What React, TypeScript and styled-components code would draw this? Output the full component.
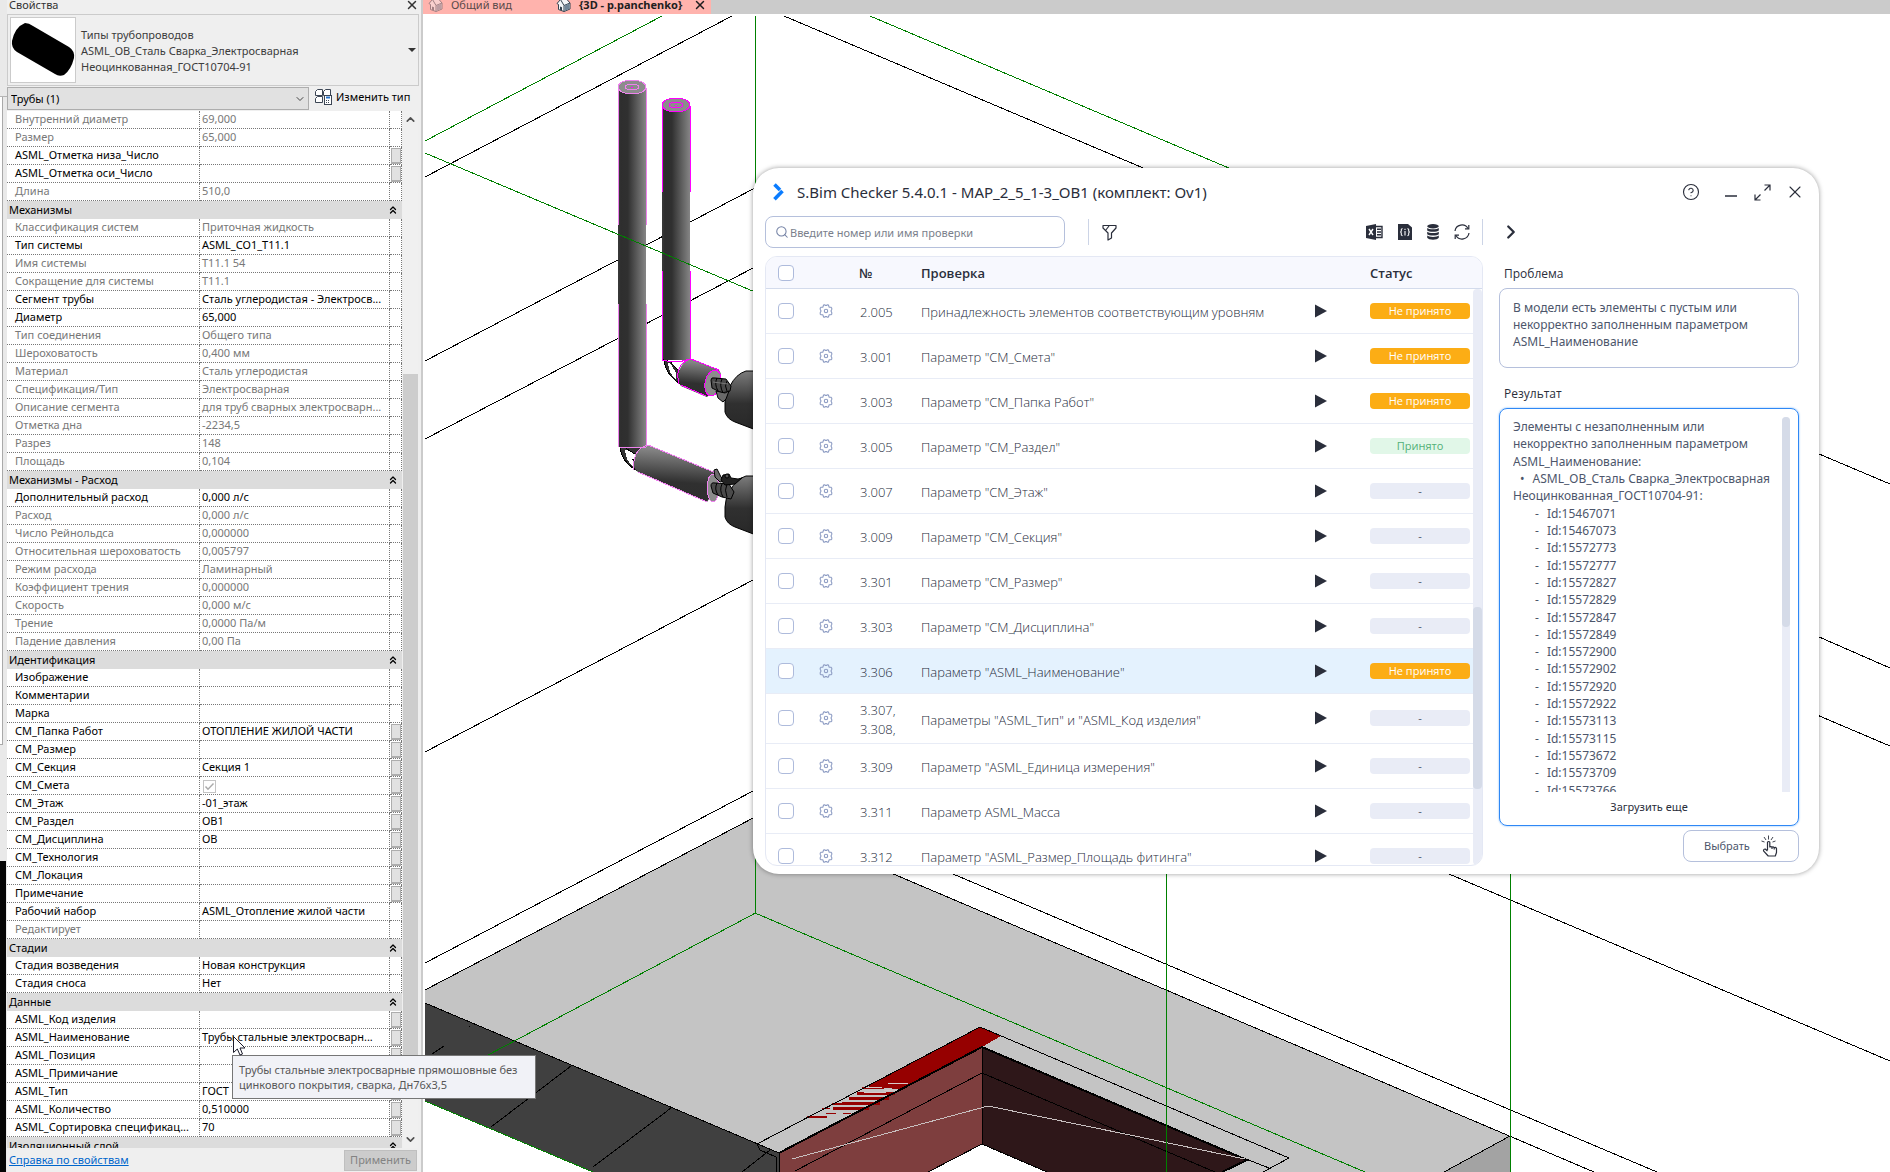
import React from 'react';
import styled, { createGlobalStyle, css } from 'styled-components';
import { ChevronDown, ChevronUp, ChevronsUp, ChevronRight, Search, X, CircleHelp } from 'lucide-react';

const uiFont = '"Noto Sans", "Open Sans", sans-serif';
const lightFont = '"Open Sans", "Noto Sans", sans-serif';

const GlobalStyle = createGlobalStyle`
  *, *::before, *::after { box-sizing: border-box; }
  body { margin: 0; background: #fff; font-family: ${uiFont}; font-size: 11px; line-height: 16px; color: #000; }
  button, input, select { font: inherit; color: inherit; margin: 0; }
  button { padding: 0; border: 0; background: none; cursor: pointer; }
`;

/* ---------- shell ---------- */

const Desktop = styled.div`
  position: relative;
  display: grid;
  grid-template-columns: 7px 416px minmax(0, 1fr);
  height: 100vh;
  overflow: hidden;
`;

const Gutter = styled.div`
  display: flex;
  flex-direction: column;
  background: #e9e9e9;
`;

const GutterTop = styled.div`
  height: 97px;
  border-bottom: 1px solid #b5b5b5;
`;

const GutterList = styled.div`
  height: 648px;
  width: 3px;
  background: #fff;
  border-right: 1px solid #a9a9a9;
  border-bottom: 1px solid #a9a9a9;
`;

const GutterGap = styled.div`
  height: 116px;
`;

const GutterDark = styled.div`
  flex: 1;
  width: 6px;
  background: #050505;
`;

/* ---------- properties palette ---------- */

const Palette = styled.aside`
  display: flex;
  flex-direction: column;
  min-width: 0;
  background: #efefef;
  border-right: 2px solid #cbcbcb;
  overflow: hidden;
`;

const PaletteTitle = styled.header`
  display: flex;
  align-items: center;
  justify-content: space-between;
  height: 14px;
  padding: 0 2px 4px;
  line-height: 10px;
  color: #333;
  flex: none;
`;

const IconButton = styled.button`
  display: grid;
  place-items: center;
  flex: none;
`;

const TypeSelector = styled.div`
  display: flex;
  align-items: center;
  gap: 5px;
  height: 72px;
  margin-right: 2px;
  padding: 2px;
  border: 1px solid #cbcbcb;
  flex: none;
  color: #3c3c3c;
`;

const Preview = styled.svg`
  width: 66px;
  height: 66px;
  background: #fff;
  border: 1px solid #cbcbcb;
  flex: none;
`;

const TypeName = styled.div`
  flex: 1;
  padding-top: 2px;
`;

const CaretDown = styled.span`
  border: 4px solid transparent;
  border-top-color: #333;
  border-bottom: 0;
`;

const FilterRow = styled.div`
  display: flex;
  align-items: flex-start;
  height: 25px;
  padding-top: 1px;
  gap: 6px;
  flex: none;
`;

const SelectWrap = styled.div`
  position: relative;
  width: 302px;

  svg {
    position: absolute;
    right: 3px;
    top: 6px;
    pointer-events: none;
  }
`;

const CategorySelect = styled.select`
  width: 100%;
  height: 23px;
  padding: 0 3px;
  appearance: none;
  background: #e1e1e1;
  border: 1px solid #adadad;
  border-radius: 0;
`;

const EditType = styled.button`
  display: flex;
  align-items: center;
  gap: 4px;
  height: 19px;
  white-space: nowrap;
`;

const GridArea = styled.div`
  display: flex;
  flex: 1;
  min-height: 0;
  overflow: hidden;
`;

const GridClip = styled.div`
  flex: 1;
  overflow: hidden;
`;

const PropTable = styled.table`
  width: 100%;
  table-layout: fixed;
  border-collapse: separate;
  border-spacing: 0;
  background: #fff;
`;

const GroupCell = styled.th`
  height: 18px;
  padding: 0 3px 0 2px;
  background: #dcdcdc;
  font-weight: 400;
  text-align: left;
`;

const GroupLine = styled.div`
  display: flex;
  align-items: center;
  justify-content: space-between;
  height: 18px;
`;

const dotted = css`
  height: 18px;
  border-bottom: 1px dotted #777;
  border-right: 1px dotted #777;
  white-space: nowrap;
  overflow: hidden;
  font-weight: 400;
  text-align: left;
  vertical-align: top;
`;

const NameCell = styled.th<{ $dim?: boolean }>`
  ${dotted}
  padding: 0 0 0 8px;
  color: ${(p) => (p.$dim ? '#787878' : '#000')};
`;

const ValueCell = styled.td<{ $dim?: boolean }>`
  ${dotted}
  padding: 0 0 0 2px;
  color: ${(p) => (p.$dim ? '#787878' : '#000')};
`;

const ButtonCell = styled.td`
  ${dotted}
  padding: 1px 0 0 1px;
`;

const LinkButton = styled.button`
  display: block;
  width: 10px;
  height: 16px;
  background: #e1e1e1;
  border: 1px solid #adadad;
  border-bottom-width: 2px;
`;

const SmallCheck = styled.input`
  appearance: none;
  display: block;
  width: 13px;
  height: 13px;
  margin: 3px 0 0 1px;
  border: 1px solid #c4c4c4;
  background: no-repeat center / 11px url("data:image/svg+xml,%3Csvg xmlns='http://www.w3.org/2000/svg' viewBox='0 0 11 11'%3E%3Cpath d='M1.5 5.5L4 8.3L9.5 2.5' fill='none' stroke='%23aaa' stroke-width='1.4'/%3E%3C/svg%3E");
`;

const ScrollColumn = styled.div`
  display: flex;
  flex-direction: column;
  align-items: center;
  width: 15px;
  margin: 0 3px 0 1px;
  background: #f0f0f0;
  color: #505050;
`;

const ScrollEnd = styled.div`
  display: grid;
  place-items: center;
  height: 17px;
`;

const ScrollTrack = styled.div`
  flex: 1;
  width: 100%;
  display: flex;
  flex-direction: column;
`;

const ScrollSpace = styled.div<{ $grow: number }>`
  flex: ${(p) => p.$grow} 0 0;
`;

const ScrollThumb = styled.div<{ $grow: number }>`
  flex: ${(p) => p.$grow} 0 0;
  background: #cdcdcd;
`;

const PaletteFooter = styled.footer`
  display: flex;
  align-items: center;
  justify-content: space-between;
  height: 24px;
  padding: 0 4px 0 2px;
  flex: none;
`;

const HelpLink = styled.a`
  color: #0066cc;
`;

const ApplyButton = styled.button`
  width: 73px;
  height: 21px;
  background: #ccc;
  border: 1px solid #bfbfbf;
  color: #838383;
`;

/* ---------- 3D view ---------- */

const Stage = styled.main`
  display: flex;
  flex-direction: column;
  min-width: 0;
`;

const TabBar = styled.nav`
  display: flex;
  height: 14px;
  background: #cbcbcb;
  flex: none;
  overflow: hidden;
`;

const ViewTab = styled.button<{ $active?: boolean }>`
  display: flex;
  align-items: center;
  gap: 8px;
  height: 14px;
  padding: 0 4px 4px 5px;
  width: ${(p) => (p.$active ? '160px' : '128px')};
  background: #ffb3ad;
  line-height: 10px;
  font-weight: ${(p) => (p.$active ? 700 : 400)};
  color: ${(p) => (p.$active ? '#1e1e1e' : '#5a4a4a')};
  white-space: nowrap;

  svg { flex: none; }
  svg:last-child:not(:first-child) { margin-left: auto; }
`;

const Canvas = styled.div`
  position: relative;
  flex: 1;
  min-height: 0;
  overflow: hidden;
`;

const SceneSvg = styled.svg`
  display: block;
  width: 100%;
  height: 100%;
`;

/* ---------- checker window ---------- */

const Checker = styled.section`
  position: absolute;
  left: 330px;
  right: 71px;
  top: 154px;
  bottom: 298px;
  display: flex;
  flex-direction: column;
  padding: 0 20px 8px 12px;
  border-radius: 26px;
  background: #fff;
  box-shadow: 0 0 5px rgba(0, 0, 0, 0.4);
  color: #4d566b;
`;

const CheckerHead = styled.header`
  display: flex;
  align-items: center;
  height: 48px;
  padding-left: 8px;
  color: #2a2e3b;
`;

const CheckerTitle = styled.h1`
  flex: 1;
  margin: 0 0 0 13px;
  font-size: 15px;
  line-height: 20px;
  font-weight: 400;
`;

const WindowButtons = styled.div`
  display: flex;
  align-items: center;
  gap: 14px;
  margin-right: -6px;

  button:nth-child(1) { margin-right: 10px; }
  button:nth-child(2) { margin-right: 2px; }
`;

const CheckerBody = styled.div`
  display: flex;
  gap: 16px;
  flex: 1;
  min-height: 0;
`;

const LeftPane = styled.div`
  flex: 1;
  min-width: 0;
  display: flex;
  flex-direction: column;
  gap: 8px;
`;

const Toolbar = styled.div`
  display: flex;
  align-items: center;
  height: 32px;
  color: #2a2e3b;
`;

const SearchBox = styled.label`
  display: flex;
  align-items: center;
  gap: 1px;
  width: 300px;
  height: 32px;
  padding: 0 9px;
  border: 1px solid #b5c0dc;
  border-radius: 8px;
  color: #7482a5;
`;

const SearchInput = styled.input`
  flex: 1;
  min-width: 0;
  border: 0;
  padding: 1px 0 0;
  outline: 0;
  background: none;

  &::placeholder { color: #7b7f8c; opacity: 1; }
`;

const Divider = styled.span<{ $gap?: number }>`
  width: 1px;
  height: 26px;
  margin-left: ${(p) => p.$gap ?? 0}px;
  background: #ccd4e6;
`;

const FilterButton = styled(IconButton)`
  margin-left: 13px;
`;

const ExportTools = styled.div`
  display: flex;
  align-items: center;
  gap: 15px;
  margin-left: auto;
  margin-right: 12px;
`;

const TableFrame = styled.div`
  position: relative;
  flex: 1;
  min-height: 0;
  overflow: hidden;
  border: 1px solid #e4e8f4;
  border-radius: 12px;
`;

const CheckTable = styled.table`
  width: 100%;
  table-layout: fixed;
  border-collapse: separate;
  border-spacing: 0;
`;

const HeadCell = styled.th<{ $pad?: number }>`
  height: 32px;
  padding: 0 0 0 ${(p) => p.$pad ?? 0}px;
  background: #f7f8fe;
  border-bottom: 1px solid #d3dbec;
  color: #2a2e3b;
  font-family: ${lightFont};
  font-size: 13px;
  font-weight: 600;
  text-align: left;
`;

const CheckRow = styled.tr<{ $selected?: boolean }>`
  background: ${(p) => (p.$selected ? '#e4f2fe' : 'transparent')};
`;

const Cell = styled.td<{ $pad?: number }>`
  height: 45px;
  padding: 5px 0 6px ${(p) => p.$pad ?? 0}px;
  border-bottom: 1px solid #e8ecf6;
  vertical-align: middle;

  svg { display: block; }
`;

const TextCell = styled(Cell)`
  padding-top: 7px;
  padding-bottom: 4px;
  font-family: ${lightFont};
  font-size: 13px;
  font-weight: 300;
  line-height: 19px;
  white-space: pre-line;
  color: #262c3d;
`;

const CheckBox = styled.input`
  appearance: none;
  display: block;
  width: 16px;
  height: 16px;
  border: 1px solid #aebbdc;
  border-radius: 4px;
  background: #fff;
`;

const Badge = styled.span<{ $kind: Status }>`
  display: block;
  width: 100px;
  height: 16px;
  border-radius: 4px;
  font-family: ${lightFont};
  line-height: 16px;
  text-align: center;
  background: ${(p) => ({ bad: '#fcad15', ok: '#e1f7e8', none: '#e9ecf6' })[p.$kind]};
  color: ${(p) => ({ bad: '#fff', ok: '#52b077', none: '#4d566b' })[p.$kind]};
`;

const TableTrack = styled.div`
  position: absolute;
  top: 32px;
  right: 0;
  bottom: 0;
  width: 9px;
  display: flex;
  flex-direction: column;
  border-radius: 4px;
  background: #e9ecf6;
`;

const Thumb = styled.div<{ $grow: number }>`
  flex: ${(p) => p.$grow} 0 0;
  border-radius: 4px;
  background: #d5dbe8;
`;

const RightPane = styled.div`
  width: 300px;
  display: flex;
  flex-direction: column;
`;

const PaneTools = styled.div`
  display: flex;
  align-items: center;
  height: 32px;
  padding-left: 1px;
  color: #2a2e3b;
`;

const PaneLabel = styled.h2`
  margin: 18px 0 6px 5px;
  font-family: ${lightFont};
  font-size: 12px;
  line-height: 16px;
  font-weight: 400;
  color: #2a2e3b;
`;

const ProblemBox = styled.div`
  height: 80px;
  padding: 10px 13px;
  border: 1px solid #b5c0dc;
  border-radius: 8px;
  font-size: 12px;
  line-height: 17px;
`;

const ResultBox = styled.div`
  display: flex;
  flex-direction: column;
  flex: 1;
  min-height: 0;
  padding: 8px 8px 0 13px;
  border: 1px solid #2f88f5;
  border-radius: 8px;
  box-shadow: 0 0 2px #6aaefc;
  font-size: 12px;
  line-height: 17px;
`;

const ResultScroll = styled.div`
  display: flex;
  justify-content: space-between;
  flex: 1;
  min-height: 0;
  overflow: hidden;
`;

const ResultLines = styled.div`
  display: grid;
  grid-auto-rows: 1fr;
  flex: none;
  height: 382px;
  padding-top: 1px;
  white-space: nowrap;
`;

const ResultLine = styled.div<{ $kind: LineKind }>`
  padding-left: ${(p) => ({ text: 0, bullet: 7, id: 22 })[p.$kind]}px;

  &::before {
    content: ${(p) => ({ text: 'none', bullet: '"•"', id: '"-"' })[p.$kind]};
    margin-right: 8px;
  }
`;

const ResultTrack = styled.div`
  display: flex;
  flex-direction: column;
  flex: none;
  width: 8px;
  border-radius: 4px 4px 0 0;
  background: #e9ecf6;
`;

const LoadMore = styled.button`
  height: 33px;
  margin-right: 5px;
  padding-bottom: 4px;
  color: #2a2e3b;
  font-size: 11px;
`;

const PickButton = styled.button`
  display: flex;
  align-items: center;
  justify-content: space-between;
  align-self: flex-end;
  width: 116px;
  height: 32px;
  margin: 4px 0 4px;
  padding: 0 20px;
  border: 1px solid #b5c0dc;
  border-radius: 8px;
`;

/* ---------- tooltip and pointer ---------- */

const Tooltip = styled.div`
  position: absolute;
  left: 232px;
  top: 1055px;
  min-width: 304px;
  padding: 6px;
  border: 1px solid #767676;
  background: #f1f2f7;
  color: #575757;
  line-height: 15px;
  white-space: nowrap;
`;

const Pointer = styled.svg`
  position: absolute;
  left: 233px;
  top: 1036px;
  width: 13px;
  height: 20px;
`;

/* ---------- data ---------- */

type Prop = { name: string; value?: string; dim?: boolean; button?: boolean; check?: boolean };
type Group = { title?: string; rows: Prop[] };
type Status = 'bad' | 'ok' | 'none';
type LineKind = 'text' | 'bullet' | 'id';

const dim = (name: string, value = ''): Prop => ({ name, value, dim: true });
const row = (name: string, value = ''): Prop => ({ name, value });
const btn = (name: string, value = ''): Prop => ({ name, value, button: true });

const groups: Group[] = [
  {
    rows: [
      dim('Внутренний диаметр', '69,000'),
      dim('Размер', '65,000'),
      btn('ASML_Отметка низа_Число'),
      btn('ASML_Отметка оси_Число'),
      dim('Длина', '510,0'),
    ],
  },
  {
    title: 'Механизмы',
    rows: [
      dim('Классификация систем', 'Приточная жидкость'),
      row('Тип системы', 'ASML_СО1_Т11.1'),
      dim('Имя системы', 'Т11.1 54'),
      dim('Сокращение для системы', 'Т11.1'),
      row('Сегмент трубы', 'Сталь углеродистая - Электросв...'),
      row('Диаметр', '65,000'),
      dim('Тип соединения', 'Общего типа'),
      dim('Шероховатость', '0,400 мм'),
      dim('Материал', 'Сталь углеродистая'),
      dim('Спецификация/Тип', 'Электросварная'),
      dim('Описание сегмента', 'для труб сварных электросварн...'),
      dim('Отметка дна', '-2234,5'),
      dim('Разрез', '148'),
      dim('Площадь', '0,104'),
    ],
  },
  {
    title: 'Механизмы - Расход',
    rows: [
      row('Дополнительный расход', '0,000 л/с'),
      dim('Расход', '0,000 л/с'),
      dim('Число Рейнольдса', '0,000000'),
      dim('Относительная шероховатость', '0,005797'),
      dim('Режим расхода', 'Ламинарный'),
      dim('Коэффициент трения', '0,000000'),
      dim('Скорость', '0,000 м/с'),
      dim('Трение', '0,0000 Па/м'),
      dim('Падение давления', '0,00 Па'),
    ],
  },
  {
    title: 'Идентификация',
    rows: [
      row('Изображение'),
      row('Комментарии'),
      row('Марка'),
      btn('СМ_Папка Работ', 'ОТОПЛЕНИЕ ЖИЛОЙ ЧАСТИ'),
      btn('СМ_Размер'),
      btn('СМ_Секция', 'Секция 1'),
      { name: 'СМ_Смета', button: true, check: true },
      btn('СМ_Этаж', '-01_этаж'),
      btn('СМ_Раздел', 'ОВ1'),
      btn('СМ_Дисциплина', 'ОВ'),
      btn('СМ_Технология'),
      btn('СМ_Локация'),
      btn('Примечание'),
      row('Рабочий набор', 'ASML_Отопление жилой части'),
      dim('Редактирует'),
    ],
  },
  {
    title: 'Стадии',
    rows: [row('Стадия возведения', 'Новая конструкция'), row('Стадия сноса', 'Нет')],
  },
  {
    title: 'Данные',
    rows: [
      btn('ASML_Код изделия'),
      btn('ASML_Наименование', 'Трубы стальные электросварн...'),
      btn('ASML_Позиция'),
      btn('ASML_Примичание'),
      btn('ASML_Тип', 'ГОСТ'),
      btn('ASML_Количество', '0,510000'),
      btn('ASML_Сортировка спецификац...', '70'),
    ],
  },
  { title: 'Изоляционный слой', rows: [] },
];

const checks: { no: string; name: string; status: Status; selected?: boolean }[] = [
  { no: '2.005', name: 'Принадлежность элементов соответствующим уровням', status: 'bad' },
  { no: '3.001', name: 'Параметр "СМ_Смета"', status: 'bad' },
  { no: '3.003', name: 'Параметр "СМ_Папка Работ"', status: 'bad' },
  { no: '3.005', name: 'Параметр "СМ_Раздел"', status: 'ok' },
  { no: '3.007', name: 'Параметр "СМ_Этаж"', status: 'none' },
  { no: '3.009', name: 'Параметр "СМ_Секция"', status: 'none' },
  { no: '3.301', name: 'Параметр "СМ_Размер"', status: 'none' },
  { no: '3.303', name: 'Параметр "СМ_Дисциплина"', status: 'none' },
  { no: '3.306', name: 'Параметр "ASML_Наименование"', status: 'bad', selected: true },
  { no: '3.307,\n3.308,', name: 'Параметры "ASML_Тип" и "ASML_Код изделия"', status: 'none' },
  { no: '3.309', name: 'Параметр "ASML_Единица измерения"', status: 'none' },
  { no: '3.311', name: 'Параметр ASML_Масса', status: 'none' },
  { no: '3.312', name: 'Параметр "ASML_Размер_Площадь фитинга"', status: 'none' },
];

const statusText: Record<Status, string> = { bad: 'Не принято', ok: 'Принято', none: '-' };

const ids = [
  15467071, 15467073, 15572773, 15572777, 15572827, 15572829, 15572847, 15572849, 15572900,
  15572902, 15572920, 15572922, 15573113, 15573115, 15573672, 15573709, 15573766,
];

const resultLines: [LineKind, string][] = [
  ['text', 'Элементы с незаполненным или'],
  ['text', 'некорректно заполненным параметром'],
  ['text', 'ASML_Наименование:'],
  ['bullet', 'ASML_ОВ_Сталь Сварка_Электросварная'],
  ['text', 'Неоцинкованная_ГОСТ10704-91:'],
  ...ids.map((id): [LineKind, string] => ['id', `Id:${id}`]),
];

/* ---------- icons ---------- */

const HouseIcon = ({ faded }: { faded?: boolean }) => (
  <svg width="15" height="14" viewBox="0 0 15 14" opacity={faded ? 0.45 : 1}>
    <path d="M1 5.5L4.5 1.5H11L14 5V11L8 13.5L2.5 11.5V6.5Z" fill="#f3f5f7" stroke="#33424f" />
    <path d="M4.5 1.5L8 7.5V13.5M8 7.5L14 5" fill="none" stroke="#33424f" />
    <path d="M8.5 7.5L13.5 5.5V10.8L8.5 13Z" fill="#6f8496" />
    <path d="M4 8.5L6 9.3V12.5L4 11.8Z" fill="#33424f" />
  </svg>
);

const EditTypeIcon = () => (
  <svg width="17" height="17" viewBox="0 0 17 17" fill="#fff" stroke="#3c4654">
    <path d="M2.5 1.5H7.5V7.5H.5V3.5ZM10.5 1.5H15.5V7.5H8.5V3.5ZM2.5 8.5H7.5V14.5H.5V10.5Z" />
    <rect x="9.5" y="7.5" width="7" height="9" />
    <path d="M11 9.5H15" stroke="#2672c8" strokeWidth="2" />
    <path d="M11 12.5H15M11 14.5H15" strokeDasharray="1 1" />
  </svg>
);

const Logo = () => (
  <svg width="11" height="18" viewBox="0 0 11 18" fill="none" stroke="#0a7cff" strokeWidth="3.6">
    <path d="M1.5 1.5L7 7" />
    <path d="M9.5 8L1.5 16.2" />
  </svg>
);

const ExpandIcon = () => (
  <svg width="17" height="17" viewBox="0 0 17 17" fill="none" stroke="currentColor" strokeWidth="1.2">
    <path d="M10.5 1H16V6.5M16 1L10.5 6.5M1 10.5V16H6.5M1 16L6.5 10.5" />
  </svg>
);

const FilterIcon = () => (
  <svg width="15" height="17" viewBox="0 0 15 17" fill="none" stroke="currentColor" strokeWidth="1.2">
    <path d="M1 1.5H14V4L9.5 9V14L6 16V9L1 4Z" strokeLinejoin="round" />
    <path d="M7 2L3.5 6.5" />
  </svg>
);

const ExcelIcon = () => (
  <svg width="17" height="16" viewBox="0 0 17 16">
    <path d="M0 2L10 0V16L0 14Z" fill="#2a2e3b" />
    <path d="M10 2.5H16V13.5H10" fill="none" stroke="#2a2e3b" strokeWidth="1.4" />
    <path d="M11 5.3H15M11 8H15M11 10.7H15" stroke="#2a2e3b" strokeWidth="1.4" />
    <path d="M3 5L7 11M7 5L3 11" stroke="#fff" strokeWidth="1.4" />
  </svg>
);

const DocIcon = () => (
  <svg width="14" height="16" viewBox="0 0 14 16">
    <path d="M0 0H10L14 3.5V16H0Z" fill="#2a2e3b" />
    <path d="M4.5 4.5Q2.8 5 3.3 6.8Q3.3 8 2.2 8Q3.3 8 3.3 9.5Q2.8 11.3 4.5 11.8M9.5 4.5Q11.2 5 10.7 6.8Q10.7 8 11.8 8Q10.7 8 10.7 9.5Q11.2 11.3 9.5 11.8M7 7V11.5M7 4.8V6" fill="none" stroke="#fff" strokeWidth="1.1" />
  </svg>
);

const DatabaseIcon = () => (
  <svg width="12" height="16" viewBox="0 0 12 16" fill="#2a2e3b">
    <ellipse cx="6" cy="2.3" rx="5.8" ry="2.2" />
    <path d="M.2 4C1.5 5.7 10.5 5.7 11.8 4V6.4C10.5 8.2 1.5 8.2 .2 6.4Z" />
    <path d="M.2 7.8C1.5 9.5 10.5 9.5 11.8 7.8V10.2C10.5 12 1.5 12 .2 10.2Z" />
    <path d="M.2 11.6C1.5 13.3 10.5 13.3 11.8 11.6V13.8C10.5 16.3 1.5 16.3 .2 13.8Z" />
  </svg>
);

const RefreshIcon = () => (
  <svg width="16" height="16" viewBox="0 0 16 16" fill="none" stroke="currentColor" strokeWidth="1.2">
    <path d="M1 7A7 7 0 0 1 14 4.5M15 9A7 7 0 0 1 2 11.5" />
    <path d="M14.8 1V4.8H11M1.2 15V11.2H5" />
  </svg>
);

const GearIcon = () => (
  <svg width="14" height="14" viewBox="0 0 14 14" fill="none" stroke="#8e9dc4" strokeWidth="1.1" strokeLinejoin="round">
    <path d="M4.6 1Q5.6 .4 6.2 1.4H7.8Q8.4 .4 9.4 1L10.2 3.2L12 3.2Q13.2 4 12.8 5.2L12 7L12.8 8.8Q13.2 10 12 10.8L10.2 10.8L9.4 13Q8.4 13.6 7.8 12.6H6.2Q5.6 13.6 4.6 13L3.8 10.8L2 10.8Q.8 10 1.2 8.8L2 7L1.2 5.2Q.8 4 2 3.2L3.8 3.2Z" />
    <circle cx="7" cy="7" r="1.7" />
  </svg>
);

const PlayIcon = () => (
  <svg width="12" height="14" viewBox="0 0 12 14" fill="#2a2e3b">
    <path d="M0 .5L12 7L0 13.5Z" />
  </svg>
);

const TapIcon = () => (
  <svg width="17" height="22" viewBox="0 0 17 22" fill="none" stroke="#2a2e3b" strokeWidth="1.2" strokeLinejoin="round">
    <path d="M6.5 15V7.2Q7.7 5.8 8.8 7.2V12Q10 11 11 12.2Q12.2 11.4 13.2 12.7Q14.8 12 15.5 13.5V17.5L14.3 21H7.2L2.5 15.8Q2.5 13.8 4.5 14.2L6.5 16M11 12.2V14M13.2 12.7V14.5" />
    <path d="M7.5 4.5V.5M5 5L3 2M3.5 7L.5 6M10 5L12 2M11.5 7L14.5 6" strokeWidth=".9" />
  </svg>
);

/* ---------- model drawing ---------- */

const ValveUpper = () => (
  <g stroke="#000" fill="#4a4a4a">
    <path d="M711 380Q711 377 715 378L726 379L731 386L730 391L722 393L712 388Z" />
    <path d="M717 378Q714 384 718 391M722 379Q719 385 723 393M727 381Q724 386 727 391" fill="none" />
    <path d="M716 391L718 398L723 402L726 399L729 391L725 393Z" fill="#6a6a6a" />
    <path d="M713 382L728 384" stroke="#777" fill="none" />
  </g>
);

const ValveLower = () => (
  <g stroke="#000" fill="#4a4a4a">
    <path d="M711 486Q711 482 715 483L729 484L734 492L731 499L722 497L713 493Z" />
    <path d="M717 483Q714 489 718 495M722 484Q719 490 723 497M727 484Q724 490 727 497" fill="none" />
    <path d="M714 470L717 469L721 477L725 481L720 482L715 477Z" fill="#6a6a6a" />
    <path d="M723 475L729 474L731 478L738 479L742 478L735 484L725 485L721 480Z" fill="#222" />
    <circle cx="727" cy="476" r="2" fill="#555" />
  </g>
);

const Tank = ({ y }: { y: number }) => (
  <path
    transform={`translate(0 ${y})`}
    d="M756 371H746Q736 374 730 386Q725 394 725 402V412Q727 419 735 422L756 430Z"
    fill="url(#tank)"
    stroke="#000"
  />
);

const hatch = [
  [862, 1088, 22], [889, 1087, 14], [857, 1093, 38], [849, 1098, 40], [842, 1103, 38], [832, 1104, 14],
  [833, 1108, 36], [826, 1113, 10], [843, 1113, 8], [822, 1108, 8], [807, 1117, 20],
];

const Scene = () => (
  <SceneSvg viewBox="423 14 1467 1158" preserveAspectRatio="xMinYMin slice" aria-label="3D модель">
    <defs>
      <linearGradient id="pipeV">
        <stop offset="0" stopColor="#3a3a3a" />
        <stop offset=".1" stopColor="#2e2e2e" />
        <stop offset=".35" stopColor="#303030" />
        <stop offset="1" stopColor="#858585" />
      </linearGradient>
      <linearGradient id="pipeH" x1=".55" y1="0" x2=".45" y2="1">
        <stop offset=".1" stopColor="#858585" />
        <stop offset=".65" stopColor="#303030" />
        <stop offset="1" stopColor="#2e2e2e" />
      </linearGradient>
      <linearGradient id="tank" x1="0" y1="0" x2="0" y2="1">
        <stop offset="0" stopColor="#7c7c7c" />
        <stop offset=".55" stopColor="#303030" />
        <stop offset="1" stopColor="#282828" />
      </linearGradient>
    </defs>

    <g shapeRendering="crispEdges" fill="none">
      {/* floor slab */}
      <path d="M425 990L757 816L1510 1136V1172H425Z" fill="#c4c4c4" />
      <path d="M1510 1136L1444 1172H1510Z" fill="#a3a3a3" />
      <path d="M425 1003L779 1153V1172H593L425 1101Z" fill="#404040" />
      <path d="M425 1101L593 1172H425Z" fill="#fff" />

      {/* opening */}
      <path d="M982 1144L928 1172H1047Z" fill="#fff" />
      <path d="M982 1047V1144L928 1172H779V1153Z" fill="#7e3e3e" />
      <path d="M982 1047L1247 1160L1222 1172H1047L982 1144Z" fill="#2e1719" />
      <path d="M980 1027L1001 1036L982 1047L913 1083L900 1089L868 1087L873 1083Z" fill="#960000" />
      {hatch.map(([x, y, w]) => (
        <path key={`${x}-${y}`} d={`M${x} ${y}h${w}`} stroke="#960000" strokeWidth={w > 30 ? 3 : w > 12 ? 2 : 1} />
      ))}
      <path d="M866 1087h16M888 1083h20M864 1092h22M884 1090h14" stroke="#d8c8c8" />

      {/* black edges */}
      <g stroke="#000">
        <path d="M425 177L732 16M784 16L1890 484M425 361L755 188M425 439L755 267M425 752L755 579" />
        <path d="M425 963L755 790M425 990L757 816L1594 1172M953 874L1657 1172M1449 874L1890 1061" />
        <path d="M1810 633L1890 668M1810 712L1890 746M1510 1136L1444 1172" />
        <path d="M425 1003L779 1153V1172M571 1066L491 1127M671 1108L593 1167M444 1046L432 1054M770 1150L742 1172M757 1144L760 1150L776 1157V1172" />
        <path d="M757 1144L980 1027L1289 1158L1263 1172M1246 1159L1269 1168" />
        <path d="M779 1153L982 1047L1247 1160L1222 1172" strokeWidth="2" />
        <path d="M982 1047V1144M928 1172L982 1144L1047 1172M795 1171L982 1073L1215 1172" />
        <path d="M469 1026h1" />
      </g>
      <path d="M792 1159L988 1106L1130 1135L1245 1159" stroke="#c8c0c0" />
    </g>

    {/* risers */}
    <rect x="618" y="87" width="28" height="360" fill="url(#pipeV)" />
    <rect x="662" y="105" width="28" height="255" fill="url(#pipeV)" />
    <g fill="none" shapeRendering="crispEdges">
      <path d="M620 447Q621 461 636 470L641 473L637 462Q628 458 627 449L641 458L646 447Z" fill="#333" stroke="#000" />
      <path d="M625 450Q626 462 633 466V461L628 450Z" fill="#fff" />
      <path d="M664 360Q666 376 682 385V372Q673 367 671 362Z" fill="#333" stroke="#000" />
      <path d="M668 363Q669 374 676 379V373L671 364Z" fill="#fff" />
    </g>
    <path d="M648 445L716 473Q719 478 716 488L707 502L638 472Q632 468 634 459Q638 447 648 445Z" fill="url(#pipeH)" />
    <path d="M692 359L719 370Q723 375 719 384L707 397L681 386Q676 380 679 371Q683 360 692 359Z" fill="url(#pipeH)" />
    <g fill="none" shapeRendering="crispEdges">
      <g stroke="#ee82ee">
        <ellipse cx="632" cy="87" rx="14" ry="7" fill="#8c8c8c" />
        <ellipse cx="632" cy="87" rx="7" ry="3" />
        <path d="M618 88V225M646 88V225M618 304V447M646 304V447M620 447Q633 449 646 447M634 470Q632 449 648 445L716 473" />
        <path d="M638 472L707 502" />
        <ellipse cx="713" cy="488" rx="6" ry="14" fill="#8c8c8c" />
      </g>
      <g stroke="#ff00ff">
        <ellipse cx="676" cy="105" rx="14" ry="7" fill="#8c8c8c" />
        <ellipse cx="676" cy="105" rx="7" ry="3" />
        <path d="M662 106V192M690 106V192M662 271V360Q676 364 690 359V271M679 384Q674 364 691 359L719 370M681 385L706 396" />
        <ellipse cx="713" cy="383" rx="8" ry="13" fill="#8c8c8c" transform="rotate(12 713 383)" />
      </g>
      <path d="M631 87h2M675 105h2" stroke="#ff00ff" />
    </g>
    <Tank y={0} />
    <Tank y={105} />
    <ValveUpper />
    <ValveLower />

    {/* section box */}
    <g stroke="#008000" fill="none" shapeRendering="crispEdges">
      <path d="M425 141L662 16M425 153L755 292M870 16L1243 174M755.5 16V913L488 1055M755 913L1365 1172" />
      <path d="M1166.5 874V1172M1510.5 874V1172M425 1101L593 1172" />
    </g>
  </SceneSvg>
);

/* ---------- sections ---------- */

const PropertiesPalette = () => (
  <Palette aria-label="Свойства">
    <PaletteTitle>
      <span>Свойства</span>
      <IconButton aria-label="Закрыть">
        <X size={14} strokeWidth={2.5} />
      </IconButton>
    </PaletteTitle>
    <TypeSelector>
      <Preview viewBox="0 0 64 64">
        <path d="M14 5Q18 5 22 8L58 29Q64 33 63 40Q60 52 53 57Q48 59 44 56L6 34Q0 30 1 23Q4 9 14 5Z" fill="#000" />
      </Preview>
      <TypeName>
        Типы трубопроводов
        <br />
        ASML_ОВ_Сталь Сварка_Электросварная
        <br />
        Неоцинкованная_ГОСТ10704-91
      </TypeName>
      <CaretDown />
    </TypeSelector>
    <FilterRow>
      <SelectWrap>
        <CategorySelect aria-label="Категория">
          <option>Трубы (1)</option>
        </CategorySelect>
        <ChevronDown size={12} color="#444" />
      </SelectWrap>
      <EditType>
        <EditTypeIcon />
        Изменить тип
      </EditType>
    </FilterRow>
    <GridArea>
      <GridClip>
        <PropTable>
          <colgroup>
            <col style={{ width: 193 }} />
            <col />
            <col style={{ width: 12 }} />
          </colgroup>
          {groups.map((g, i) => (
            <tbody key={i}>
              {g.title && (
                <tr>
                  <GroupCell colSpan={3} scope="rowgroup">
                    <GroupLine>
                      {g.title}
                      <IconButton aria-label={`Свернуть: ${g.title}`}>
                        <ChevronsUp size={12} strokeWidth={2.5} />
                      </IconButton>
                    </GroupLine>
                  </GroupCell>
                </tr>
              )}
              {g.rows.map((r) => (
                <tr key={r.name}>
                  <NameCell scope="row" $dim={r.dim}>{r.name}</NameCell>
                  <ValueCell $dim={r.dim}>
                    {r.check ? <SmallCheck type="checkbox" defaultChecked disabled aria-label={r.name} /> : r.value}
                  </ValueCell>
                  <ButtonCell>{r.button && <LinkButton aria-label={`Связать: ${r.name}`} />}</ButtonCell>
                </tr>
              ))}
            </tbody>
          ))}
        </PropTable>
      </GridClip>
      <ScrollColumn>
        <ScrollEnd><ChevronUp size={13} strokeWidth={3} /></ScrollEnd>
        <ScrollTrack>
          <ScrollSpace $grow={246} />
          <ScrollThumb $grow={697} />
          <ScrollSpace $grow={61} />
        </ScrollTrack>
        <ScrollEnd><ChevronDown size={13} strokeWidth={3} /></ScrollEnd>
      </ScrollColumn>
    </GridArea>
    <PaletteFooter>
      <HelpLink href="#help">Справка по свойствам</HelpLink>
      <ApplyButton disabled>Применить</ApplyButton>
    </PaletteFooter>
  </Palette>
);

const CheckerWindow = () => (
  <Checker>
    <CheckerHead>
      <Logo />
      <CheckerTitle>S.Bim Checker 5.4.0.1 - MAP_2_5_1-3_OB1 (комплект: Ov1)</CheckerTitle>
      <WindowButtons>
        <IconButton aria-label="Справка"><CircleHelp size={18} strokeWidth={1.5} /></IconButton>
        <IconButton aria-label="Свернуть">
          <svg width="14" height="14" viewBox="0 0 14 14"><path d="M1 11H13" stroke="currentColor" strokeWidth="1.5" /></svg>
        </IconButton>
        <IconButton aria-label="Развернуть"><ExpandIcon /></IconButton>
        <IconButton aria-label="Закрыть"><X size={20} strokeWidth={1.3} /></IconButton>
      </WindowButtons>
    </CheckerHead>
    <CheckerBody>
      <LeftPane>
        <Toolbar>
          <SearchBox>
            <Search size={14} strokeWidth={1.8} />
            <SearchInput placeholder="Введите номер или имя проверки" aria-label="Поиск проверки" />
          </SearchBox>
          <Divider $gap={23} />
          <FilterButton aria-label="Фильтр"><FilterIcon /></FilterButton>
          <ExportTools>
            <IconButton aria-label="Excel"><ExcelIcon /></IconButton>
            <IconButton aria-label="Отчёт"><DocIcon /></IconButton>
            <IconButton aria-label="База данных"><DatabaseIcon /></IconButton>
            <IconButton aria-label="Обновить"><RefreshIcon /></IconButton>
          </ExportTools>
          <Divider />
        </Toolbar>
        <TableFrame>
          <CheckTable>
            <colgroup>
              <col style={{ width: 40 }} />
              <col style={{ width: 40 }} />
              <col style={{ width: 75 }} />
              <col />
              <col style={{ width: 40 }} />
              <col style={{ width: 127 }} />
            </colgroup>
            <thead>
              <tr>
                <HeadCell $pad={12}><CheckBox type="checkbox" aria-label="Выбрать все" /></HeadCell>
                <HeadCell />
                <HeadCell $pad={13}>№</HeadCell>
                <HeadCell>Проверка</HeadCell>
                <HeadCell />
                <HeadCell $pad={15}>Статус</HeadCell>
              </tr>
            </thead>
            <tbody>
              {checks.map((c) => (
                <CheckRow key={c.no} $selected={c.selected}>
                  <Cell $pad={12}><CheckBox type="checkbox" aria-label={`Выбрать ${c.no}`} /></Cell>
                  <Cell $pad={13}><IconButton aria-label={`Настроить ${c.no}`}><GearIcon /></IconButton></Cell>
                  <TextCell $pad={14}>{c.no}</TextCell>
                  <TextCell>{c.name}</TextCell>
                  <Cell><IconButton aria-label={`Запустить ${c.no}`}><PlayIcon /></IconButton></Cell>
                  <Cell $pad={15}><Badge $kind={c.status}>{statusText[c.status]}</Badge></Cell>
                </CheckRow>
              ))}
            </tbody>
          </CheckTable>
          <TableTrack>
            <ScrollSpace $grow={318} />
            <Thumb $grow={182} />
            <ScrollSpace $grow={76} />
          </TableTrack>
        </TableFrame>
      </LeftPane>
      <RightPane>
        <PaneTools>
          <IconButton aria-label="Скрыть панель"><ChevronRight size={22} strokeWidth={2.5} /></IconButton>
        </PaneTools>
        <PaneLabel>Проблема</PaneLabel>
        <ProblemBox>
          В модели есть элементы с пустым или
          <br />
          некорректно заполненным параметром
          <br />
          ASML_Наименование
        </ProblemBox>
        <PaneLabel>Результат</PaneLabel>
        <ResultBox>
          <ResultScroll>
            <ResultLines>
              {resultLines.map(([kind, text]) => (
                <ResultLine key={text} $kind={kind}>{text}</ResultLine>
              ))}
            </ResultLines>
            <ResultTrack>
              <Thumb $grow={210} />
              <ScrollSpace $grow={165} />
            </ResultTrack>
          </ResultScroll>
          <LoadMore>Загрузить еще</LoadMore>
        </ResultBox>
        <PickButton>
          Выбрать
          <TapIcon />
        </PickButton>
      </RightPane>
    </CheckerBody>
  </Checker>
);

export default function App() {
  return (
    <>
      <GlobalStyle />
      <Desktop>
        <Gutter>
          <GutterTop />
          <GutterList />
          <GutterGap />
          <GutterDark />
        </Gutter>
        <PropertiesPalette />
        <Stage>
          <TabBar>
            <ViewTab>
              <HouseIcon faded />
              Общий вид
            </ViewTab>
            <ViewTab $active>
              <HouseIcon />
              {'{3D - p.panchenko}'}
              <X size={14} strokeWidth={2.5} />
            </ViewTab>
          </TabBar>
          <Canvas>
            <Scene />
            <CheckerWindow />
          </Canvas>
        </Stage>
        <Tooltip role="tooltip">
          Трубы стальные электросварные прямошовные без
          <br />
          цинкового покрытия, сварка, Дн76х3,5
        </Tooltip>
        <Pointer viewBox="0 0 13 20">
          <path d="M.5 .5V16.5L4.3 13L7 19L9.5 18L7 12H12Z" fill="#fff" stroke="#1b1b2b" />
        </Pointer>
      </Desktop>
    </>
  );
}
